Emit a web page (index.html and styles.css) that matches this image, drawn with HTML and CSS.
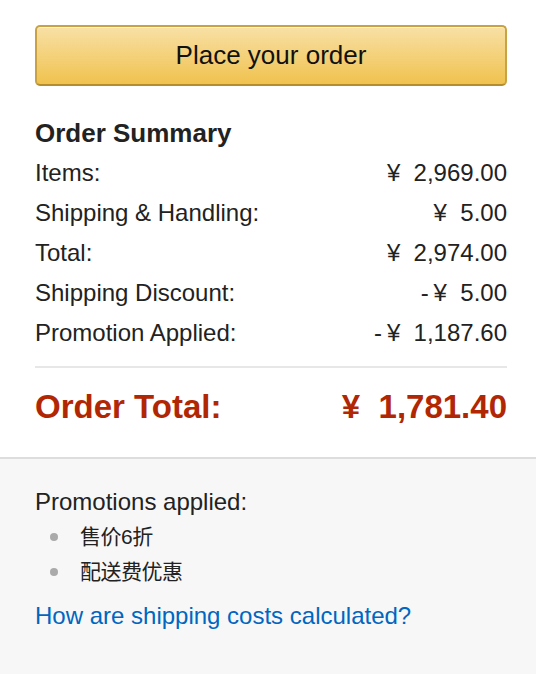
FILE: index.html
```html
<!DOCTYPE html>
<html>
<head>
<meta charset="utf-8">
<link rel="stylesheet" href="styles.css">
</head>
<body>
<div class="top">
  <button class="place">Place your order</button>
  <h3 class="heading">Order Summary</h3>
  <div class="row"><span>Items:</span><span>¥&nbsp; 2,969.00</span></div>
  <div class="row"><span>Shipping &amp; Handling:</span><span>¥&nbsp; 5.00</span></div>
  <div class="row"><span>Total:</span><span>¥&nbsp; 2,974.00</span></div>
  <div class="row"><span>Shipping Discount:</span><span>-&thinsp;¥&nbsp; 5.00</span></div>
  <div class="row"><span>Promotion Applied:</span><span>-&thinsp;¥&nbsp; 1,187.60</span></div>
  <div class="divider"></div>
  <div class="row total"><span>Order Total:</span><span>¥&nbsp; 1,781.40</span></div>
</div>
<div class="bottom">
  <div class="line">Promotions applied:</div>
  <ul class="promos">
    <li>售价6折</li>
    <li>配送费优惠</li>
  </ul>
  <a class="link" href="#">How are shipping costs calculated?</a>
</div>
</body>
</html>
```
FILE: styles.css
```css
html, body {
  margin: 0;
  padding: 0;
  background: #f7f7f7;
  font-family: "Liberation Sans", Arial, "Noto Sans CJK SC", sans-serif;
  color: #111;
}
.top {
  background: #fff;
  padding: 25px 29px 30px 35px;
}
.place {
  display: block;
  box-sizing: border-box;
  width: 100%;
  height: 61px;
  border: 2px solid #c9a244;
  border-bottom-color: #b48d2e;
  border-radius: 5px;
  background: linear-gradient(to bottom, #f8e0a6 0%, #f0c24e 100%);
  box-shadow: inset 0 1px 0 rgba(255,255,255,0.6);
  font-family: "Liberation Sans", Arial, sans-serif;
  font-size: 26px;
  color: #111;
  padding: 0;
  margin: 0;
}
.heading {
  margin: 27px 0 0;
  font-size: 26px;
  line-height: 40px;
  font-weight: bold;
  color: #222;
}
.row {
  display: flex;
  justify-content: space-between;
  font-size: 24px;
  line-height: 40px;
  color: #222;
}
.divider {
  height: 2px;
  background: #e7e7e7;
  margin: 13px 0 19px;
}
.row.total {
  font-size: 33px;
  font-weight: bold;
  color: #b12704;
  line-height: 40px;
}
.bottom {
  border-top: 2px solid #dddddd;
  background: #f7f7f7;
  padding: 25px 29px 40px 35px;
  font-size: 24px;
  color: #222;
}
.line {
  line-height: 35px;
}
.promos {
  list-style: none;
  margin: 0;
  padding: 0;
}
.promos li {
  display: flex;
  align-items: center;
  line-height: 35px;
  font-size: 21px;
  letter-spacing: -0.5px;
  font-family: "Liberation Sans", Arial, "Noto Sans CJK SC", sans-serif;
}
.promos li::before {
  content: "";
  width: 8px;
  height: 8px;
  border-radius: 50%;
  background: #aaaaaa;
  margin-left: 15px;
  margin-right: 22px;
}
.link {
  display: block;
  margin-top: 9px;
  line-height: 35px;
  color: #0066c0;
  text-decoration: none;
}
```
